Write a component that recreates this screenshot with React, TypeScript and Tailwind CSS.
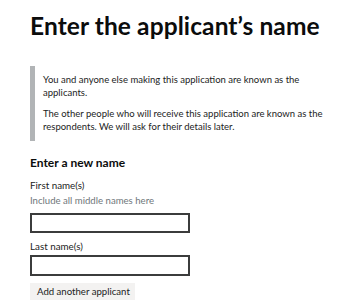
import React from 'react'

const App = () => {
    return (
        <div className="w-[346px] h-[300px] overflow-hidden bg-white pl-[30px] text-[#0b0c0c] font-['Lato',sans-serif]">
            <h1 className="mt-[11.5px] text-[24.5px] leading-[28px] font-bold tracking-[0.1px]">
                Enter the applicant’s name
            </h1>
            <div className="mt-[26.5px] w-[300px] border-l-[5px] border-[#b1b4b6] pl-[8px] pt-[7px] pb-[8px] text-[9.5px] leading-[13px] text-[#222323]">
                <p>You and anyone else making this application are known as the applicants.</p>
                <p className="mt-[8px]">
                    The other people who will receive this application are known as the respondents. We will ask for their details later.
                </p>
            </div>
            <h2 className="mt-[14px] text-[12px] leading-[16px] font-bold">Enter a new name</h2>
            <label className="block mt-[7px] text-[9.8px] leading-[14px] text-[#222323]">First name(s)</label>
            <div className="mt-[2px] text-[9.6px] leading-[14px] text-[#6f777b]">
                Include all middle names here
            </div>
            <input
                className="block mt-[5px] w-[160px] h-[20px] border-2 border-[#3b3c3c] bg-white outline-none"
                type="text"
            />
            <label className="block mt-[6px] text-[9.8px] leading-[14px] text-[#222323]">Last name(s)</label>
            <input
                className="block mt-[2px] w-[160px] h-[21px] border-2 border-[#3b3c3c] bg-white outline-none"
                type="text"
            />
            <button className="mt-[6.5px] h-[24px] pl-[7px] pr-[5px] pt-[2.5px] bg-[#f3f2f1] text-[9.6px] leading-[14px] text-[#222323] flex items-start">
                Add another applicant
            </button>
        </div>
    )
}

export default App
